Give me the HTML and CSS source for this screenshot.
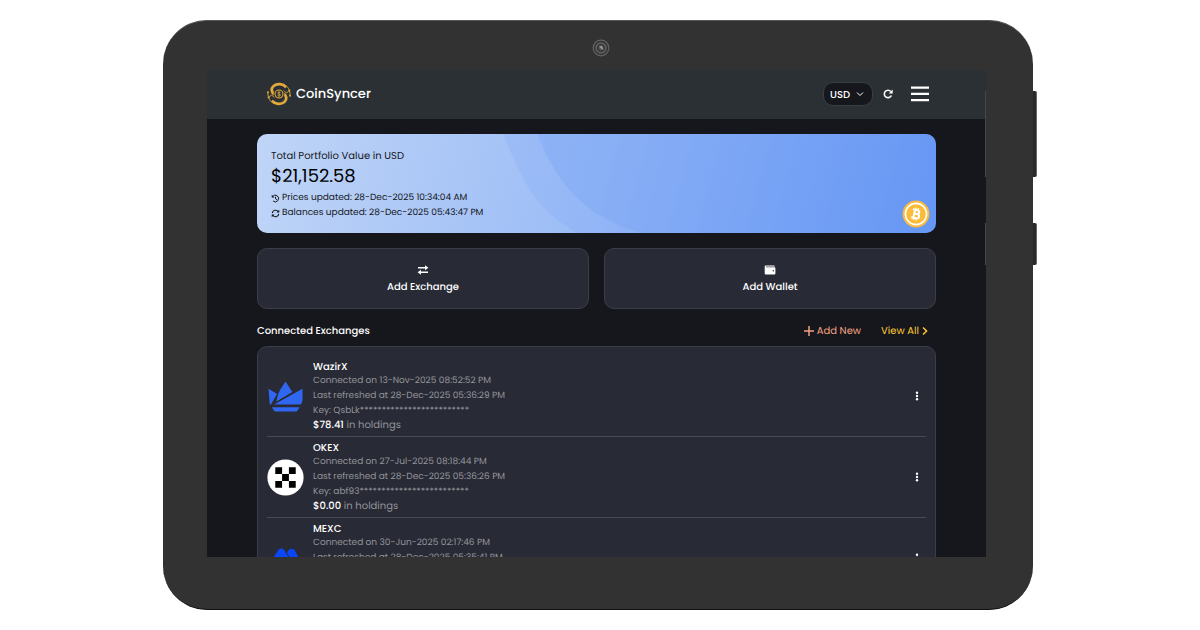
FILE: index.html
```html
<!DOCTYPE html>
<html lang="en">
<head>
    <meta charset="UTF-8">
    <meta name="viewport" content="width=device-width, initial-scale=1.0">
    <title>CoinSyncer</title>
    <link rel="stylesheet" href="styles.css">
</head>
<body>
    <div class="tablet">
        <span class="side-button power"></span>
        <span class="side-button volume"></span>
        <div class="bezel-top">
            <svg class="camera" viewBox="0 0 18 18">
                <circle cx="9" cy="9" r="7.8" fill="#333" stroke="#626262" stroke-width="1.2"/>
                <circle cx="9" cy="9" r="5" fill="#3b3b3b" stroke="#626262" stroke-width="1.5"/>
                <circle cx="9" cy="9" r="2.4" fill="#555"/>
                <path d="M7 7l3 0 1.5 3.5-2-.5z" fill="#999"/>
            </svg>
        </div>
        <div class="screen">
            <header class="topbar">
                <a class="brand" href="#">
                    <svg class="brand-logo" viewBox="0 0 26 24" fill="none" stroke="#e0a93c">
                        <path d="M20.2 5.2C17 1.6 11 1.2 7.6 4 4.6 6.6 5.4 10.6 8.6 12.2 10 13 11 13.6 12 15" stroke-width="2.8"/>
                        <path d="M5.8 18.8C9 22.4 15 22.8 18.4 20 21.4 17.4 20.6 13.4 17.4 11.8 16 11 15 10.4 14 9" stroke-width="2.8"/>
                        <circle cx="13" cy="12" r="4.4" fill="#2b3034" stroke="#2b3034" stroke-width="2"/>
                        <circle cx="13" cy="12" r="4" stroke-width="1.1"/>
                        <path d="M14.5 10.7C13.8 9.8 11.7 9.9 11.7 11c0 1.3 2.8.8 2.8 2.1 0 1.2-2.2 1.3-3 .3M13 9.2v5.6" stroke-width=".8"/>
                        <path d="M2 10.500C1.600 14 2.800 17.200 5 19.600M24 13.500C24.400 10 23.200 6.800 21 4.400M2.600 15.500l3-2.600 2.600 2.600M23.400 8.500l-3 2.600-2.600-2.600" stroke-width=".9"/>
                        <g fill="#e0a93c" stroke="none">
                            <circle cx="2" cy="10.3" r="1"/><circle cx="2.6" cy="15.5" r="1"/><circle cx="24" cy="13.7" r="1"/><circle cx="23.4" cy="8.5" r="1"/>
                        </g>
                    </svg>
                    <span>CoinSyncer</span>
                </a>
                <div class="tools">
                    <div class="currency">
                        <select aria-label="Currency">
                            <option>USD</option>
                        </select>
                        <svg class="chevron" viewBox="0 0 8 6" fill="none" stroke="#fff"><path d="M1 1.5l3 3 3-3"/></svg>
                    </div>
                    <button class="icon-button" aria-label="Refresh">
                        <svg class="refresh" viewBox="0 0 10 10" fill="none" stroke="#fff" stroke-width="1.6"><path d="M8.4 6.5A3.7 3.7 0 1 1 7.8 2.5"/><path d="M9.7.5v4H5.8z" fill="#fff" stroke="none"/></svg>
                    </button>
                    <button class="icon-button" aria-label="Menu">
                        <svg class="menu" viewBox="0 0 18 16" fill="#fff"><path d="M0 .6h18v2.2H0zM0 6.8h18V9H0zM0 13h18v2.2H0z"/></svg>
                    </button>
                </div>
            </header>

            <main class="content">
                <section class="portfolio">
                    <svg class="portfolio-waves" viewBox="0 0 679 99" preserveAspectRatio="xMinYMin slice">
                        <path d="M246 0C268 52 278 74 320 99H679V0z" fill="#7ba5f5" fill-opacity=".22"/>
                        <path d="M280 0C300 48 325 82 384 99H679V0z" fill="#6f9ef4" fill-opacity=".28"/>
                    </svg>
                    <div class="portfolio-text">
                        <p class="portfolio-label">Total Portfolio Value in USD</p>
                        <p class="portfolio-value">$21,152.58</p>
                        <p class="updated">
                            <svg viewBox="0 0 10 10" fill="none" stroke="#15171c" stroke-width="1.1"><path d="M1.6 3A3.7 3.7 0 1 1 2.3 7.8M5 3v2.3l1.6 1"/><path d="M.8.8v3.1h3.1z" fill="#15171c" stroke="none"/></svg>
                            Prices updated: 28-Dec-2025 10:34:04 AM
                        </p>
                        <p class="updated">
                            <svg viewBox="0 0 10 10" fill="none" stroke="#15171c" stroke-width="1.2"><path d="M1.4 4.6A3.6 3.6 0 0 1 8 3M8.6 5.4A3.6 3.6 0 0 1 2 7"/><path d="M9.2.8v3.2H6zM.8 9.2V6H4z" fill="#15171c" stroke="none"/></svg>
                            Balances updated: 28-Dec-2025 05:43:47 PM
                        </p>
                    </div>
                    <svg class="bitcoin" viewBox="0 0 28 28">
                        <circle cx="14" cy="14" r="13.4" fill="#fdbb3a"/>
                        <circle cx="14" cy="14" r="10.6" fill="#fdbb3a" stroke="#fff" stroke-width="1.6"/>
                        <g transform="rotate(12 14 14)" fill="none" stroke="#fff" stroke-width="2">
                            <path d="M10 10h4.6c3 0 3 3.900 0 3.900H12h3c3.400 0 3.400 4.300 0 4.300h-5M12.200 10v8.300"/>
                            <path d="M12.7 7.8v2M15.2 7.8v2M12.7 18.2v2M15.2 18.2v2" stroke-width="1.3"/>
                        </g>
                    </svg>
                </section>

                <div class="actions">
                    <button class="action">
                        <svg viewBox="0 0 12 10" fill="none" stroke="#fff" stroke-width="1.5"><path d="M1 2.8h8M11 7.2H3"/><path d="M8 .2l3.4 2.6L8 5.2zM4 4.8L.6 7.2 4 9.8z" fill="#fff" stroke="none"/></svg>
                        Add Exchange
                    </button>
                    <button class="action">
                        <svg viewBox="0 0 12 10"><path d="M1.6.5h8.2a1 1 0 0 1 1 1H2v.7h8.4a1 1 0 0 1 1 1v5.2a1 1 0 0 1-1 1H1.7a1 1 0 0 1-1-1v-7a1 1 0 0 1 .9-.9z" fill="#fff"/><path d="M2 1.3h8.6v.7H2z" fill="#aaa"/><circle cx="9.3" cy="5.8" r=".7" fill="#282a35"/></svg>
                        Add Wallet
                    </button>
                </div>

                <div class="section-head">
                    <h2>Connected Exchanges</h2>
                    <nav class="section-links">
                        <a class="add-new" href="#"><svg viewBox="0 0 10 10" fill="none" stroke="currentColor" stroke-width="1.5"><path d="M5 0v10M0 5h10"/></svg>Add New</a>
                        <a class="view-all" href="#">View All<svg viewBox="0 0 6 10" fill="none" stroke="currentColor" stroke-width="1.5"><path d="M1 1.5L4.6 5 1 8.5"/></svg></a>
                    </nav>
                </div>

                <ul class="exchanges">
                    <li class="exchange">
                        <svg class="exchange-logo" viewBox="0 0 38 38" fill="#3067f0">
                            <path d="M19 3.5l7.2 11.2L9.4 24.5l2.5-9.8z"/>
                            <path d="M1.5 11l9 5.4-6 10.6-1.6.5zM36.5 11v11.8l-1.5 4.4H7.2z"/>
                            <path d="M5 30h28.5l-2.3 3.6a2 2 0 0 1-1.5.8H8.8a2 2 0 0 1-1.500-.8z"/>
                            <path d="M12.5 13.5L4 28.5 27.5 14" fill="none" stroke="#282a35"/>
                        </svg>
                        <div class="exchange-info">
                            <h3>WazirX</h3>
                            <p>Connected on 13-Nov-2025 08:52:52 PM</p>
                            <p>Last refreshed at 28-Dec-2025 05:36:29 PM</p>
                            <p>Key: QsbLk*************************</p>
                            <p class="holdings"><strong>$78.41</strong> in holdings</p>
                        </div>
                        <button class="more" aria-label="WazirX options"><svg viewBox="0 0 4 10" fill="#fff"><circle cx="2" cy="1.7" r="1.2"/><circle cx="2" cy="5" r="1.2"/><circle cx="2" cy="8.3" r="1.2"/></svg></button>
                    </li>
                    <li class="exchange">
                        <svg class="exchange-logo" viewBox="0 0 38 38">
                            <circle cx="19" cy="19" r="18.6" fill="#fff"/>
                            <path d="M8.5 8.5h7v7h-7zM22.5 8.5h7v7h-7zM15.5 15.5h7v7h-7zM8.5 22.5h7v7h-7zM22.5 22.5h7v7h-7z"/>
                        </svg>
                        <div class="exchange-info">
                            <h3>OKEX</h3>
                            <p>Connected on 27-Jul-2025 08:18:44 PM</p>
                            <p>Last refreshed at 28-Dec-2025 05:36:26 PM</p>
                            <p>Key: abf93*************************</p>
                            <p class="holdings"><strong>$0.00</strong> in holdings</p>
                        </div>
                        <button class="more" aria-label="OKEX options"><svg viewBox="0 0 4 10" fill="#fff"><circle cx="2" cy="1.7" r="1.2"/><circle cx="2" cy="5" r="1.2"/><circle cx="2" cy="8.3" r="1.2"/></svg></button>
                    </li>
                    <li class="exchange">
                        <svg class="exchange-logo" viewBox="0 0 38 38" fill="#0a46f5">
                            <path d="M2 26L11 11c1.700-3 5.600-3 7.200 0L20 14.200 21 12c1.600-3.600 6.200-3.800 8-.8l7 14.800c1.200 2.400-.4 4-2.600 4H4.500C2 30 .8 28 2 26z"/>
                            <path d="M19 11.5l3.5 6" stroke="#282a35" fill="none"/>
                        </svg>
                        <div class="exchange-info">
                            <h3>MEXC</h3>
                            <p>Connected on 30-Jun-2025 02:17:46 PM</p>
                            <p>Last refreshed at 28-Dec-2025 05:35:41 PM</p>
                        </div>
                        <button class="more" aria-label="MEXC options"><svg viewBox="0 0 4 10" fill="#fff"><circle cx="2" cy="1.7" r="1.2"/><circle cx="2" cy="5" r="1.2"/><circle cx="2" cy="8.3" r="1.2"/></svg></button>
                    </li>
                </ul>
            </main>
        </div>
    </div>
</body>
</html>
```
FILE: styles.css
```css
* {
    box-sizing: border-box;
    margin: 0;
    padding: 0;
}
body {
    height: 100vh;
    padding: 20px 167px 20px 163px;
    background: #fff;
    font-family: Poppins, Inter, sans-serif;
    font-size: 10px;
    text-rendering: geometricPrecision;
    color: #fff;
    overflow: hidden;
}
a {
    color: inherit;
    text-decoration: none;
}
button {
    background: none;
    border: none;
    color: inherit;
    font: inherit;
    text-rendering: inherit;
    cursor: pointer;
}
svg {
    display: block;
    flex: none;
}

/* tablet frame */
.tablet {
    position: relative;
    display: flex;
    flex-direction: column;
    height: 100%;
    padding: 0 47px 52px 44px;
    background: #323232;
    border-top: 1px solid #555;
    border-bottom: 1px solid #111;
    border-radius: 44px;
}
.bezel-top {
    display: flex;
    justify-content: center;
    flex: none;
    height: 49px;
    padding-top: 18px;
    padding-left: 8px;
}
.camera {
    width: 18px;
    height: 18px;
}
.side-button {
    position: absolute;
    right: -4px;
    width: 4px;
    background: #292929;
    border-right: 1px solid #666;
    border-radius: 0 2px 2px 0;
}
.side-button::before {
    content: "";
    position: absolute;
    top: 0;
    right: 50px;
    width: 1px;
    height: 100%;
    background: #45464a;
}
.power {
    top: 70px;
    height: 86px;
}
.volume {
    top: 202px;
    height: 42px;
}
.screen {
    flex: 1;
    min-height: 0;
    overflow: hidden;
    background: #16171c;
}

/* header */
.topbar {
    display: flex;
    align-items: center;
    justify-content: space-between;
    height: 49px;
    padding: 0 57px 1px 59px;
    background: #2b3034;
}
.brand {
    display: flex;
    align-items: center;
    gap: 4px;
    font-size: 13px;
    font-weight: 500;
}
.brand-logo {
    width: 26px;
    height: 24px;
}
.tools {
    display: flex;
    align-items: center;
    gap: 10px;
}
.currency {
    position: relative;
}
.currency select {
    display: block;
    width: 50px;
    height: 24px;
    padding-left: 6px;
    appearance: none;
    background: #16171c;
    border: 1px solid #3b3d45;
    border-radius: 10px;
    color: #fff;
    font: inherit;
    font-weight: 500;
    text-rendering: inherit;
}
.chevron {
    position: absolute;
    top: 9px;
    right: 9px;
    width: 8px;
    height: 6px;
    pointer-events: none;
}
.refresh {
    width: 10px;
    height: 10px;
}
.icon-button + .icon-button {
    margin-left: 8px;
}
.menu {
    width: 18px;
    height: 16px;
}

/* portfolio */
.content {
    padding: 15px 50px;
}
.portfolio {
    position: relative;
    height: 99px;
    padding: 15px 14px;
    overflow: hidden;
    border-radius: 10px;
    background: linear-gradient(105deg, #c0d5f7, #9bbcf6 50%, #5c90f4);
    color: #15171c;
}
.portfolio-waves {
    position: absolute;
    inset: 0;
    width: 100%;
    height: 100%;
}
.portfolio-text {
    position: relative;
}
.portfolio-label {
    line-height: 14px;
}
.portfolio-value {
    font-size: 18px;
    line-height: 28px;
    color: #000;
}
.updated {
    display: flex;
    align-items: center;
    gap: 2px;
    font-size: 9px;
    line-height: 15px;
}
.updated svg {
    width: 9px;
    height: 9px;
}
.bitcoin {
    position: absolute;
    right: 6px;
    bottom: 5px;
    width: 28px;
    height: 28px;
}

/* actions */
.actions {
    display: grid;
    grid-template-columns: 1fr 1fr;
    gap: 15px;
    margin-top: 15px;
}
.action {
    display: flex;
    flex-direction: column;
    align-items: center;
    justify-content: center;
    gap: 5px;
    height: 61px;
    padding-top: 1px;
    background: #282a35;
    border: 1px solid #3b3d48;
    border-radius: 10px;
    font-weight: 500;
    line-height: 14px;
}
.action svg {
    width: 12px;
    height: 10px;
}

/* connected exchanges */
.section-head {
    display: flex;
    align-items: center;
    justify-content: space-between;
    height: 37px;
    padding: 6px 8px 0 0;
}
.section-head h2 {
    font-size: 10px;
    font-weight: 500;
}
.section-links {
    display: flex;
    gap: 20px;
}
.section-links a {
    display: flex;
    align-items: center;
    gap: 3px;
}
.add-new {
    color: #f4a081;
}
.add-new svg {
    width: 10px;
    height: 10px;
}
.view-all {
    color: #fcc736;
}
.view-all svg {
    width: 6px;
    height: 10px;
}
.exchanges {
    padding: 9px;
    list-style: none;
    background: #282a35;
    border: 1px solid #3b3d48;
    border-radius: 10px;
}
.exchange {
    display: flex;
    align-items: center;
    gap: 9px;
    min-height: 81px;
    padding: 4px 7px 4px 0;
    border-bottom: 1px solid #484a55;
}
.exchange-logo {
    width: 37px;
    height: 37px;
}
.exchange-info {
    flex: 1;
    min-height: 72px;
    font-size: 9px;
    line-height: 15px;
    color: #93949a;
}
.exchange-info h3 {
    font-size: 10px;
    font-weight: 500;
    line-height: 14px;
    color: #fff;
}
.exchange-info .holdings {
    font-size: 10px;
    line-height: 12px;
}
.holdings strong {
    font-weight: 500;
    color: #fff;
}
.more svg {
    width: 4px;
    height: 10px;
}
```
